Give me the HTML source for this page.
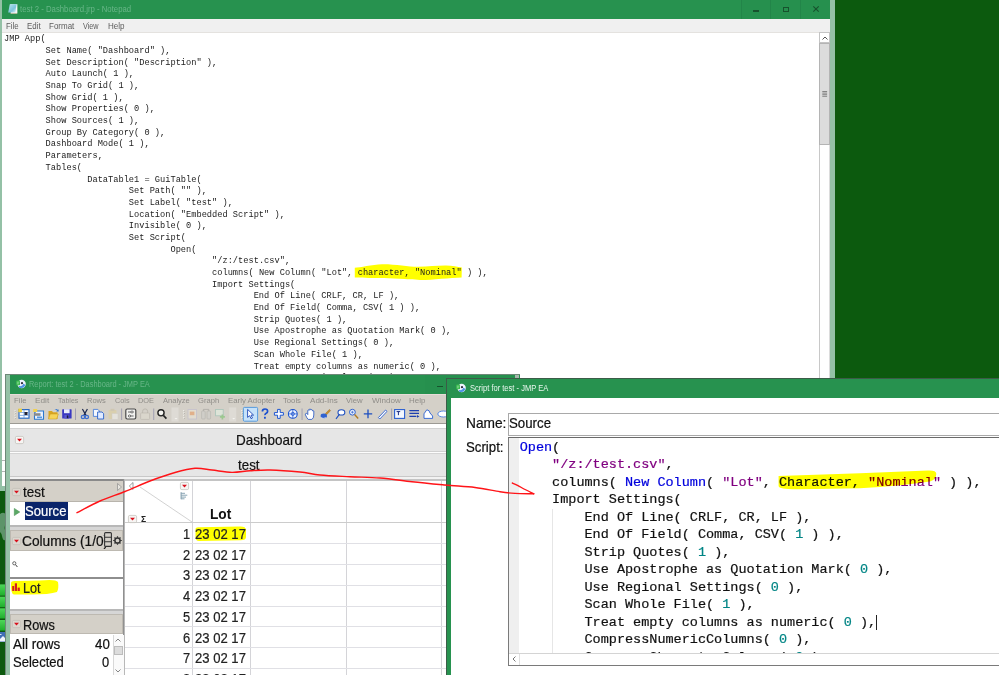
<!DOCTYPE html>
<html><head><meta charset="utf-8"><title>JMP Dashboard script</title>
<style>
*{box-sizing:border-box;margin:0;padding:0}
html,body{width:999px;height:675px;overflow:hidden;background:#0c5a0e}
body{position:relative;font-family:"Liberation Sans",sans-serif;color:#000}
.a{position:absolute}
.t{position:absolute;white-space:pre;line-height:1;transform-origin:0 0}
pre{position:absolute;font-family:"Liberation Mono",monospace;tab-size:8;-moz-tab-size:8;white-space:pre}
svg{position:absolute;overflow:visible}
.w{position:absolute;overflow:hidden}
.kb{color:#0000dd}.ks{color:#800080}.kn{color:#008585}

</style></head>
<body>
<svg style="left:0;top:0" width="6" height="675" viewBox="0 0 6 675"><path d="M0 514Q3 512 5 513.5L5.2 524Q4 528 5.2 531L5 540Q3.5 541 2.5 538L1.5 534L0 532Z" fill="#5d9469"/></svg>
<svg style="left:0;top:0" width="6" height="675" viewBox="0 0 6 675"><defs><linearGradient id="g584" x1="0" y1="0" x2="0" y2="1"><stop offset="0" stop-color="#4fd65a"/><stop offset="1" stop-color="#1fae2c"/></linearGradient></defs><rect x="0" y="584.4" width="5.2" height="11.2" fill="url(#g584)"/></svg>
<svg style="left:0;top:0" width="6" height="675" viewBox="0 0 6 675"><defs><linearGradient id="g596" x1="0" y1="0" x2="0" y2="1"><stop offset="0" stop-color="#4fd65a"/><stop offset="1" stop-color="#1fae2c"/></linearGradient></defs><rect x="0" y="596.7" width="5.2" height="10.5" fill="url(#g596)"/></svg>
<svg style="left:0;top:0" width="6" height="675" viewBox="0 0 6 675"><defs><linearGradient id="g608" x1="0" y1="0" x2="0" y2="1"><stop offset="0" stop-color="#4fd65a"/><stop offset="1" stop-color="#1fae2c"/></linearGradient></defs><rect x="0" y="608.3" width="5.2" height="10.2" fill="url(#g608)"/></svg>
<svg style="left:0;top:0" width="6" height="675" viewBox="0 0 6 675"><defs><linearGradient id="g620" x1="0" y1="0" x2="0" y2="1"><stop offset="0" stop-color="#4fd65a"/><stop offset="1" stop-color="#1fae2c"/></linearGradient></defs><rect x="0" y="620" width="5.2" height="10.6" fill="url(#g620)"/></svg>
<div class="a" style="left:0px;top:632px;width:5px;height:10px;background:#3f6fb5;"></div>
<svg style="left:0;top:633px" width="5" height="9" viewBox="0 0 5 9"><path d="M0 6L3 3L5 5V8.5H0Z" fill="#f0f4fa"/><path d="M0 1.5h1.5" stroke="#dfe8f5" stroke-width="1"/></svg>
<div class="a" style="left:0px;top:0px;width:835px;height:491px;background:#94c1a6;"></div>
<div class="a" style="left:2px;top:0px;width:828px;height:19px;background:#27924f;"></div>
<div class="a" style="left:741px;top:0px;width:89px;height:19px;background:#26904e;"></div>
<div class="a" style="left:741px;top:0px;width:1px;height:19px;background:#228549;"></div>
<div class="a" style="left:770px;top:0px;width:1px;height:19px;background:#228549;"></div>
<div class="a" style="left:800px;top:0px;width:1px;height:19px;background:#228549;"></div>
<div class="a" style="left:753px;top:10px;width:6px;height:1.5px;background:#17522d;"></div>
<div class="a" style="left:783px;top:7px;width:6px;height:5px;background:transparent;border:1px solid #17522d"></div>
<svg style="left:813px;top:6px" width="6" height="6" viewBox="0 0 6 6"><path d="M0.3 0.3L5.7 5.7M5.7 0.3L0.3 5.7" stroke="#17522d" stroke-width="1.1" fill="none"/></svg>
<svg style="left:7.6px;top:4.3px" width="10" height="10" viewBox="0 0 10 10"><defs><linearGradient id="npg" x1="0" y1="0" x2="1" y2="1"><stop offset="0" stop-color="#b8e4f0"/><stop offset="0.6" stop-color="#7cc4dc"/><stop offset="1" stop-color="#e8f6fa"/></linearGradient></defs><path d="M2.2 0.3h7.2v9h-6.6z" fill="#f4f8fa"/><path d="M1.8 0.3h6.8l-1.2 8.2h-7.2z" fill="url(#npg)"/><path d="M2.6 9.4h6.6" stroke="#e8c8b4" stroke-width="0.7"/></svg>
<div class="t" style="left:20.28px;top:5px;font-size:8.6px;transform:scaleX(0.9051);color:#68b688;">test 2 - Dashboard.jrp - Notepad</div>
<div class="a" style="left:2px;top:19px;width:828px;height:14px;background:#f0f0f0;border-bottom:1px solid #e4e2df"></div>
<div class="t" style="left:5.96px;top:22px;font-size:8.8px;transform:scaleX(0.8890);color:#5c5c5c;">File</div>
<div class="t" style="left:26.86px;top:22px;font-size:8.8px;transform:scaleX(0.8976);color:#5c5c5c;">Edit</div>
<div class="t" style="left:48.85px;top:22px;font-size:8.8px;transform:scaleX(0.9087);color:#5c5c5c;">Format</div>
<div class="t" style="left:82.67px;top:22px;font-size:8.8px;transform:scaleX(0.8247);color:#5c5c5c;">View</div>
<div class="t" style="left:107.84px;top:22px;font-size:8.8px;transform:scaleX(0.9164);color:#5c5c5c;">Help</div>
<div class="a" style="left:2px;top:33px;width:818px;height:453px;background:#fff;"></div>
<svg style="left:0;top:0" width="999" height="675"><path d="M354.8 267.8C360 267.5 372 264.5 382 264.2C395 264 408 266.8 418 266.8C428 266.6 438 265.4 446 265.5C452 265.6 458 267 461.8 267.6L461.6 277.4C450 277.6 432 280 420 279.9C408 279.5 390 278.3 380 278.1C370 277.9 360 277.5 354.8 277.4Z" fill="#ffff00"/></svg>
<pre style="left:4.4px;top:33.25px;font-size:9.3px;line-height:11.69px;color:#1c1c1c;transform:scaleX(0.9323);transform-origin:0 0">JMP App(
	Set Name( &quot;Dashboard&quot; ),
	Set Description( &quot;Description&quot; ),
	Auto Launch( 1 ),
	Snap To Grid( 1 ),
	Show Grid( 1 ),
	Show Properties( 0 ),
	Show Sources( 1 ),
	Group By Category( 0 ),
	Dashboard Mode( 1 ),
	Parameters,
	Tables(
		DataTable1 = GuiTable(
			Set Path( &quot;&quot; ),
			Set Label( &quot;test&quot; ),
			Location( &quot;Embedded Script&quot; ),
			Invisible( 0 ),
			Set Script(
				Open(
					&quot;/z:/test.csv&quot;,
					columns( New Column( &quot;Lot&quot;, character, &quot;Nominal&quot; ) ),
					Import Settings(
						End Of Line( CRLF, CR, LF ),
						End Of Field( Comma, CSV( 1 ) ),
						Strip Quotes( 1 ),
						Use Apostrophe as Quotation Mark( 0 ),
						Use Regional Settings( 0 ),
						Scan Whole File( 1 ),
						Treat empty columns as numeric( 0 ),
						CompressNumericColumns( 0 ),
						CompressCharacterColumns( 0 ),</pre>
<div class="a" style="left:819px;top:33px;width:11px;height:453px;background:#fff;border-left:1px solid #c8c8c8;border-right:1px solid #dcdcdc"></div>
<div class="a" style="left:819px;top:32px;width:11px;height:11px;background:#fff;border:1px solid #c4c4c4"></div>
<svg style="left:822px;top:36px" width="6" height="4" viewBox="0 0 6 4"><path d="M0.5 3.5L3 1L5.5 3.5" stroke="#555" stroke-width="1" fill="none"/></svg>
<div class="a" style="left:819px;top:43px;width:11px;height:102px;background:#dcdcdc;border:1px solid #b4b4b4"></div>
<svg style="left:0;top:0" width="999" height="120" viewBox="0 0 999 120"><path d="M822.3 91.5h4.8M822.3 93.1h4.8M822.3 94.7h4.8M822.3 96.3h4.8" stroke="#7a7a7a" stroke-width="0.9"/></svg>
<div class="a" style="left:2px;top:460px;width:3px;height:1px;background:#b4b4b4;"></div>
<div class="a" style="left:2px;top:471px;width:3px;height:1px;background:#b4b4b4;"></div>
<div class="a" style="left:5px;top:374px;width:515px;height:301px;background:#6e8878;"></div>
<div class="a" style="left:6px;top:375px;width:514px;height:300px;background:#94c1a6;"></div>
<div class="a" style="left:10px;top:375px;width:510px;height:19px;background:#27924f;"></div>
<div class="a" style="left:425px;top:375px;width:95px;height:19px;background:#26904e;"></div>
<div class="a" style="left:437px;top:385.5px;width:6px;height:1.2px;background:#17522d;"></div>
<div class="a" style="left:515px;top:375px;width:4px;height:3px;background:#a8b8ae;"></div>
<svg style="left:15.5px;top:379px" width="10" height="10" viewBox="0 0 10 10"><circle cx="5.6" cy="5" r="4.2" fill="#eef4ff"/><path d="M3 8.4q3 1.6 5.4-0.6l-1-2.2q-2 2-4.4 1.4z" fill="#4f93e6"/><path d="M6.8 4.6l2.6 1.4-1.4 1.6z" fill="#2f7fe0"/><rect x="0.2" y="1.6" width="3.8" height="4.6" rx="0.8" fill="#36b84a"/><path d="M0.8 3.2h2.6M0.8 4.8h2" stroke="#bff0c4" stroke-width="0.6"/><circle cx="6" cy="4.2" r="1.1" fill="#2a2a3a"/></svg>
<div class="t" style="left:29.18px;top:380px;font-size:8.4px;transform:scaleX(0.8867);color:#68b688;">Report: test 2 - Dashboard - JMP EA</div>
<div class="a" style="left:10px;top:394px;width:437px;height:29.5px;background:#d4d0c8;border-bottom:1px solid #9c9a94;border-top:1px solid #e6dcd8"></div>
<div class="t" style="left:14.34px;top:397px;font-size:8.0px;transform:scaleX(0.9631);color:#8f8d88;">File</div>
<div class="t" style="left:34.99px;top:397px;font-size:8.0px;transform:scaleX(1.0310);color:#8f8d88;">Edit</div>
<div class="t" style="left:57.73px;top:397px;font-size:8.0px;transform:scaleX(0.8785);color:#8f8d88;">Tables</div>
<div class="t" style="left:87.15px;top:397px;font-size:8.0px;transform:scaleX(0.9411);color:#8f8d88;">Rows</div>
<div class="t" style="left:114.81px;top:397px;font-size:8.0px;transform:scaleX(0.9160);color:#8f8d88;">Cols</div>
<div class="t" style="left:138.37px;top:397px;font-size:8.0px;transform:scaleX(0.9195);color:#8f8d88;">DOE</div>
<div class="t" style="left:162.79px;top:397px;font-size:8.0px;transform:scaleX(0.9422);color:#8f8d88;">Analyze</div>
<div class="t" style="left:198.49px;top:397px;font-size:8.0px;transform:scaleX(0.9510);color:#8f8d88;">Graph</div>
<div class="t" style="left:228.13px;top:397px;font-size:8.0px;transform:scaleX(0.9801);color:#8f8d88;">Early Adopter</div>
<div class="t" style="left:283.37px;top:397px;font-size:8.0px;transform:scaleX(0.9612);color:#8f8d88;">Tools</div>
<div class="t" style="left:309.76px;top:397px;font-size:8.0px;transform:scaleX(1.0089);color:#8f8d88;">Add-Ins</div>
<div class="t" style="left:346.07px;top:397px;font-size:8.0px;transform:scaleX(0.9698);color:#8f8d88;">View</div>
<div class="t" style="left:371.58px;top:397px;font-size:8.0px;transform:scaleX(1.0107);color:#8f8d88;">Window</div>
<div class="t" style="left:409.32px;top:397px;font-size:8.0px;transform:scaleX(0.9922);color:#8f8d88;">Help</div>
<svg style="left:0;top:0" width="447" height="675" viewBox="0 0 447 675"><rect x="14.6" y="410.0" width="1.3" height="1.3" fill="#f7f6f2"/><rect x="15.299999999999999" y="410.7" width="0.8" height="0.8" fill="#9a978f"/><rect x="14.6" y="412.4" width="1.3" height="1.3" fill="#f7f6f2"/><rect x="15.299999999999999" y="413.09999999999997" width="0.8" height="0.8" fill="#9a978f"/><rect x="14.6" y="414.8" width="1.3" height="1.3" fill="#f7f6f2"/><rect x="15.299999999999999" y="415.5" width="0.8" height="0.8" fill="#9a978f"/><rect x="14.6" y="417.2" width="1.3" height="1.3" fill="#f7f6f2"/><rect x="15.299999999999999" y="417.9" width="0.8" height="0.8" fill="#9a978f"/><rect x="19" y="409.6" width="10" height="8.6" fill="#fff" stroke="#2a6cc6" stroke-width="1.2"/><path d="M19 412.5h10M19 415.4h10M24 409.6v8.6" stroke="#6f9fe0" stroke-width="0.8"/><rect x="24.5" y="412" width="3" height="3" fill="#223"/><path d="M18.3 408.6h3.6v3.6h-3.6z" fill="#f2d23c"/><path d="M36 411h7.5v8.2h-9v-6z" fill="#eaf2ff" stroke="#2a78d0" stroke-width="1.1"/><rect x="33.2" y="409" width="4" height="3" fill="#f0d050"/><rect x="34" y="413.2" width="6.5" height="2.6" fill="#8a8a8a"/><rect x="37" y="416.5" width="5" height="1.6" fill="#5a9ae0"/><path d="M48.5 411h3.5l1 1.2h4.5v6.8h-9z" fill="#d9a520"/><path d="M48.5 419l1.6-5h8.2l-1.6 5z" fill="#f6d458" stroke="#c89818" stroke-width="0.5"/><path d="M54.5 409.6q2-1.6 3.6 0.4l0.6-1v2.6h-2.6l1-0.8q-1-1.2-2.6-1.2z" fill="#3a7ad0"/><rect x="62.2" y="409.2" width="9.4" height="9.4" rx="0.6" fill="#3a38c2"/><rect x="64" y="409.2" width="5.6" height="4" fill="#e8ecfa"/><rect x="64.4" y="415" width="4.6" height="3.6" fill="#5a58d0"/><rect x="66.8" y="415.4" width="1.6" height="2.8" fill="#1a1a40"/><rect x="75.1" y="408.5" width="0.9" height="11.5" fill="#9c9ab0"/><path d="M82.4 409l3.6 6.4M87.4 409l-3.6 6.4" stroke="#1e2a50" stroke-width="1.2" fill="none"/><circle cx="83" cy="417" r="1.7" fill="none" stroke="#3c6ed0" stroke-width="1.3"/><circle cx="86.8" cy="417" r="1.7" fill="none" stroke="#3c6ed0" stroke-width="1.3"/><path d="M93.4 409.4h4.4l1.6 1.6v5.4h-6z" fill="#f4f8ff" stroke="#4a7ed8" stroke-width="0.9"/><path d="M97.6 412h4.4l1.6 1.6v5.4h-6z" fill="#dfeaff" stroke="#2a62c8" stroke-width="0.9"/><rect x="108.5" y="410" width="8" height="9" rx="0.8" fill="#d9cfae"/><rect x="110.5" y="408.8" width="4" height="2.2" fill="#cfc7b2"/><rect x="112" y="413.5" width="6" height="6" fill="#e4e2dc" stroke="#cfccc4" stroke-width="0.5"/><rect x="121.2" y="408.5" width="0.9" height="11.5" fill="#9c9ab0"/><rect x="125.8" y="409" width="10" height="10" rx="1.4" fill="#f2f2f0" stroke="#4a4a4a" stroke-width="1.2"/><path d="M128 412h5.6M128 416h5.6" stroke="#444" stroke-width="0.8"/><circle cx="132" cy="412" r="1.1" fill="#fff" stroke="#333" stroke-width="0.6"/><circle cx="129.6" cy="416" r="1.1" fill="#fff" stroke="#333" stroke-width="0.6"/><rect x="140.6" y="413" width="9" height="6.4" rx="0.8" fill="#dad6cc" stroke="#bdb9b0" stroke-width="0.7"/><path d="M142.6 413v-1.6a2.5 2.5 0 0 1 5 0v1.6" fill="none" stroke="#bdb9b0" stroke-width="1"/><rect x="153.3" y="408.5" width="0.9" height="11.5" fill="#9c9ab0"/><circle cx="161" cy="412.8" r="3.1" fill="#f4f4f0" stroke="#222" stroke-width="1.4"/><path d="M163.4 415.4l3 3.2" stroke="#222" stroke-width="1.6"/><rect x="171.5" y="407.5" width="7" height="14" fill="#dedbd5"/><path d="M174.5 418h3l-1.5 1.6z" fill="#f5f4f0"/><rect x="183.2" y="410.0" width="1.3" height="1.3" fill="#f7f6f2"/><rect x="183.89999999999998" y="410.7" width="0.8" height="0.8" fill="#9a978f"/><rect x="183.2" y="412.4" width="1.3" height="1.3" fill="#f7f6f2"/><rect x="183.89999999999998" y="413.09999999999997" width="0.8" height="0.8" fill="#9a978f"/><rect x="183.2" y="414.8" width="1.3" height="1.3" fill="#f7f6f2"/><rect x="183.89999999999998" y="415.5" width="0.8" height="0.8" fill="#9a978f"/><rect x="183.2" y="417.2" width="1.3" height="1.3" fill="#f7f6f2"/><rect x="183.89999999999998" y="417.9" width="0.8" height="0.8" fill="#9a978f"/><rect x="188" y="409.6" width="8.6" height="9.4" fill="#e2dccf" stroke="#c4c0cc" stroke-width="0.8"/><rect x="189.8" y="411.6" width="4.6" height="3.6" fill="#e0b08a"/><rect x="201.6" y="411" width="3.6" height="8" rx="0.8" fill="#d0cec8" stroke="#b4b2ac" stroke-width="0.6"/><rect x="207" y="411" width="3.6" height="8" rx="0.8" fill="#d0cec8" stroke="#b4b2ac" stroke-width="0.6"/><path d="M203.4 411v-1.6h5.4v1.6" fill="none" stroke="#a8a6a0" stroke-width="0.7"/><rect x="215.6" y="409.4" width="7.6" height="6.4" fill="#dde4d8" stroke="#a8c4b8" stroke-width="0.8"/><path d="M222.4 414.4v5M219.9 416.9h5" stroke="#9cc890" stroke-width="1.7"/><rect x="229.2" y="407.5" width="7" height="14" fill="#dedbd5"/><path d="M232.2 418h3l-1.5 1.6z" fill="#f5f4f0"/><rect x="241.2" y="410.0" width="1.3" height="1.3" fill="#f7f6f2"/><rect x="241.89999999999998" y="410.7" width="0.8" height="0.8" fill="#9a978f"/><rect x="241.2" y="412.4" width="1.3" height="1.3" fill="#f7f6f2"/><rect x="241.89999999999998" y="413.09999999999997" width="0.8" height="0.8" fill="#9a978f"/><rect x="241.2" y="414.8" width="1.3" height="1.3" fill="#f7f6f2"/><rect x="241.89999999999998" y="415.5" width="0.8" height="0.8" fill="#9a978f"/><rect x="241.2" y="417.2" width="1.3" height="1.3" fill="#f7f6f2"/><rect x="241.89999999999998" y="417.9" width="0.8" height="0.8" fill="#9a978f"/><rect x="243.4" y="407.4" width="14.2" height="13.8" rx="1" fill="#c6e2fa" stroke="#4a94dc" stroke-width="0.9"/><path d="M247.6 409.4v8l2-1.7 1.5 3 1.4-0.7-1.5-2.9h2.6z" fill="#fff" stroke="#1f49b8" stroke-width="0.9"/><path d="M262.4 411.4q0-2.4 2.6-2.4t2.6 2.2q0 1.4-1.4 2.1t-1.2 1.8" fill="none" stroke="#1a4fd0" stroke-width="1.7"/><rect x="264" y="416.8" width="1.8" height="1.9" fill="#1a4fd0"/><path d="M277.6 409.4h2.6v3.2h3.2v2.6h-3.2v3.2h-2.6v-3.2h-3.2v-2.6h3.2z" fill="#fff" stroke="#1d55d0" stroke-width="1"/><circle cx="292.8" cy="413.9" r="4.4" fill="#e8f0ff" stroke="#1d55d0" stroke-width="1.1"/><circle cx="292.8" cy="413.9" r="1.6" fill="none" stroke="#1d55d0" stroke-width="0.8"/><path d="M288.4 413.9h8.8M292.8 409.5v8.8" stroke="#1d55d0" stroke-width="0.7"/><rect x="301.6" y="408.5" width="0.9" height="11.5" fill="#9c9ab0"/><path d="M306.6 413.2l1.2 1.4v-4.2q0.8-0.8 1.4 0v-1q0.8-0.8 1.6 0v0.6q0.8-0.8 1.6 0v0.8q0.8-0.6 1.4 0.2v4q0 3.4-2 4.4h-3.6q-1.2-1-2.8-4.6q-0.2-1.4 1.2-1.6z" fill="#fff" stroke="#1d4fc0" stroke-width="0.8"/><path d="M325.4 413.6l4-4.2 1.2 1.2-4 4.2z" fill="#c8902c" stroke="#8a5e18" stroke-width="0.4"/><ellipse cx="323.8" cy="416" rx="3.2" ry="2.4" fill="#2f62d0"/><path d="M321 417.6q2 1.6 5 0" stroke="#fff" stroke-width="0.6" fill="none"/><ellipse cx="341.4" cy="412.4" rx="3.4" ry="2.6" fill="#fff" stroke="#1d4fc0" stroke-width="1.1"/><path d="M339.4 414.4l-3.4 4.4" stroke="#1d4fc0" stroke-width="1.1"/><circle cx="352.4" cy="412.2" r="2.9" fill="#eef4ff" stroke="#2a5fd0" stroke-width="1"/><path d="M351 412.2h2.8M352.4 410.8v2.8" stroke="#2a5fd0" stroke-width="0.7"/><path d="M354.6 414.6l3.6 3.8" stroke="#b07a20" stroke-width="1.4"/><path d="M368 409.6v8.6M363.8 413.9h8.4" stroke="#1d4fc0" stroke-width="1.3"/><path d="M378.4 417.6l7.2-7.6 1.4 1.4-7.2 7.6z" fill="#fff" stroke="#2a5fd0" stroke-width="0.9"/><rect x="391.2" y="408.5" width="0.9" height="11.5" fill="#9c9ab0"/><rect x="394.6" y="409.6" width="10" height="8.8" fill="#f4f8ff" stroke="#2a5fd0" stroke-width="1.1"/><path d="M396.6 411.6h3.6M398.4 411.6v3.6" stroke="#1a2a80" stroke-width="1"/><path d="M409.4 410.6h9.6M409.4 413.4h9.6M409.4 416.4h7" stroke="#1d3fb0" stroke-width="1.2"/><path d="M417 415l2.4 1.4-2.4 1.4z" fill="#1d3fb0"/><path d="M424 418.4v-4.6l2.8-4q2.8 0.2 3.2 3.2l2.6 3v2.4z" fill="#fff" stroke="#2a5fd0" stroke-width="0.9"/><ellipse cx="443.4" cy="414" rx="5.6" ry="3" fill="#fff" stroke="#4a7fe0" stroke-width="0.9"/></svg>
<div class="a" style="left:10px;top:424px;width:437px;height:4.5px;background:#fff;"></div>
<div class="a" style="left:10px;top:428px;width:437px;height:24px;background:#e6e6e6;border-top:1px solid #d2d2d2;border-bottom:1px solid #d0d0d0"></div>
<div class="a" style="left:10px;top:452px;width:437px;height:1px;background:#fdfdfd;"></div>
<div class="a" style="left:10px;top:453px;width:437px;height:24px;background:#e6e6e6;border-top:1px solid #d4d4d4;border-bottom:1px solid #c8c8c8"></div>
<div class="a" style="left:10px;top:477px;width:437px;height:2px;background:#f2f2f2;"></div>
<div class="t" style="left:236.12px;top:433px;font-size:14.3px;transform:scaleX(0.9423);color:#111;-webkit-text-stroke:0.22px;">Dashboard</div>
<div class="t" style="left:238.43px;top:458px;font-size:14.3px;transform:scaleX(0.9336);color:#111;-webkit-text-stroke:0.22px;">test</div>
<svg style="left:14.6px;top:436px" width="9" height="8" viewBox="0 0 9 8"><rect x="0.4" y="0.4" width="8.2" height="7.2" rx="1.4" fill="#f6f5f3" stroke="#c2beb8" stroke-width="0.7"/><path d="M2 2.8h5L4.5 5.6z" fill="#d8101c"/></svg>
<div class="a" style="left:10px;top:479px;width:114px;height:196px;background:#909090;"></div>
<div class="a" style="left:124px;top:479px;width:1px;height:196px;background:#b8b8b8;"></div>
<div class="a" style="left:10px;top:479px;width:113px;height:2px;background:#8a8a8a;"></div>
<div class="a" style="left:10px;top:481px;width:113px;height:21px;background:#d4d0c8;border-bottom:1px solid #b8b4ac"></div>
<svg style="left:12.3px;top:487.5px" width="9" height="8" viewBox="0 0 9 8"><rect x="0.4" y="0.4" width="8.2" height="7.2" rx="1.4" fill="#dbd7cf" stroke="#c2beb6" stroke-width="0.7"/><path d="M2 2.8h5L4.5 5.6z" fill="#d8101c"/></svg>
<div class="t" style="left:22.73px;top:485px;font-size:14.3px;transform:scaleX(0.9423);color:#111;-webkit-text-stroke:0.22px;">test</div>
<svg style="left:116.5px;top:482.5px" width="5" height="8" viewBox="0 0 5 8"><path d="M0.5 0.5L4.5 4L0.5 7.5z" fill="#e8e6e0" stroke="#8c8c8c" stroke-width="0.7"/></svg>
<div class="a" style="left:10px;top:502px;width:113px;height:23.5px;background:#fff;"></div>
<svg style="left:14px;top:507.5px" width="6" height="8" viewBox="0 0 6 8"><path d="M0.3 0.4L5.8 4L0.3 7.6z" fill="#5aa865" stroke="#3f8a4c" stroke-width="0.5"/></svg>
<div class="a" style="left:25px;top:502px;width:42.5px;height:17.5px;background:#0a246a;"></div>
<div class="t" style="left:25.21px;top:504px;font-size:14.3px;transform:scaleX(0.9143);color:#fff;-webkit-text-stroke:0.22px;">Source</div>
<div class="a" style="left:10px;top:525px;width:113px;height:2px;background:#b8b8b8;"></div>
<div class="a" style="left:10px;top:527px;width:113px;height:4px;background:#d6d6d6;"></div>
<div class="a" style="left:10px;top:530px;width:113px;height:21px;background:#d4d0c8;border:1px solid #bdb9b1"></div>
<svg style="left:12.3px;top:536.5px" width="9" height="8" viewBox="0 0 9 8"><rect x="0.4" y="0.4" width="8.2" height="7.2" rx="1.4" fill="#dbd7cf" stroke="#c2beb6" stroke-width="0.7"/><path d="M2 2.8h5L4.5 5.6z" fill="#d8101c"/></svg>
<div class="t" style="left:22.28px;top:534px;font-size:14.3px;transform:scaleX(0.9597);color:#111;-webkit-text-stroke:0.22px;">Columns (1/0)</div>
<svg style="left:104.3px;top:532px" width="8" height="15" viewBox="0 0 8 15"><rect x="0.6" y="0.6" width="6.8" height="13.8" rx="1" fill="#d4d0c8" stroke="#333" stroke-width="1.1"/><path d="M0.6 5.2h6.8M0.6 9.8h6.8" stroke="#333" stroke-width="1.1"/></svg>
<svg style="left:112.8px;top:535.6px" width="9" height="9" viewBox="0 0 9 9"><circle cx="4.5" cy="4.5" r="2.6" fill="none" stroke="#333" stroke-width="1.5"/><path d="M4.5 0.2v1.6M4.5 7.2v1.6M0.2 4.5h1.6M7.2 4.5h1.6M1.5 1.5l1.1 1.1M6.4 6.4l1.1 1.1M1.5 7.5l1.1-1.1M6.4 2.6l1.1-1.1" stroke="#333" stroke-width="1.2"/></svg>
<div class="a" style="left:10px;top:550.5px;width:113px;height:27px;background:#fff;"></div>
<svg style="left:11.5px;top:561px" width="6" height="7" viewBox="0 0 6 7"><circle cx="2.3" cy="2.3" r="1.6" fill="none" stroke="#444" stroke-width="0.8"/><path d="M3.5 3.6L5.4 6" stroke="#444" stroke-width="1"/></svg>
<div class="a" style="left:10px;top:577.3px;width:113px;height:1.5px;background:#8e8e8e;"></div>
<div class="a" style="left:10px;top:578.8px;width:113px;height:30px;background:#fff;"></div>
<svg style="left:0;top:0" width="999" height="675"><path d="M11 583 Q11 580.5 16 581 L40 580.5 Q56 579 58 582 Q59 588 57 592 Q50 594.5 30 594.5 L14 594.5 Q10.5 594 11 583Z" fill="#ffff00"/></svg>
<svg style="left:12px;top:583px" width="8" height="8" viewBox="0 0 8 8"><rect x="0.2" y="3" width="2" height="5" fill="#d62020"/><rect x="2.8" y="0.3" width="2.2" height="7.7" fill="#d62020"/><rect x="5.6" y="4.6" width="2.2" height="3.4" fill="#d62020"/></svg>
<div class="t" style="left:23.17px;top:581px;font-size:14.3px;transform:scaleX(0.8870);color:#222;-webkit-text-stroke:0.22px;">Lot</div>
<div class="a" style="left:10px;top:608.5px;width:113px;height:2px;background:#b8b8b8;"></div>
<div class="a" style="left:10px;top:610.5px;width:113px;height:3px;background:#d6d6d6;"></div>
<div class="a" style="left:10px;top:613.5px;width:113px;height:20px;background:#d4d0c8;border:1px solid #bdb9b1"></div>
<svg style="left:12.3px;top:619.5px" width="9" height="8" viewBox="0 0 9 8"><rect x="0.4" y="0.4" width="8.2" height="7.2" rx="1.4" fill="#dbd7cf" stroke="#c2beb6" stroke-width="0.7"/><path d="M2 2.8h5L4.5 5.6z" fill="#d8101c"/></svg>
<div class="t" style="left:22.67px;top:618px;font-size:14.3px;transform:scaleX(0.8895);color:#111;-webkit-text-stroke:0.22px;">Rows</div>
<div class="a" style="left:10px;top:633.5px;width:113px;height:42px;background:#fff;"></div>
<div class="t" style="left:13.20px;top:637px;font-size:14.3px;transform:scaleX(0.9429);color:#111;-webkit-text-stroke:0.22px;">All rows</div>
<div class="t" style="left:94.64px;top:637px;font-size:14.3px;transform:scaleX(0.9292);color:#111;-webkit-text-stroke:0.22px;">40</div>
<div class="t" style="left:12.72px;top:655px;font-size:14.3px;transform:scaleX(0.9132);color:#111;-webkit-text-stroke:0.22px;">Selected</div>
<div class="t" style="left:102.29px;top:655px;font-size:14.3px;transform:scaleX(0.9000);color:#111;-webkit-text-stroke:0.22px;">0</div>
<div class="a" style="left:112.5px;top:634.5px;width:11px;height:41px;background:#fafafa;border-left:1px solid #d8d8d8"></div>
<svg style="left:115px;top:638px" width="6" height="4" viewBox="0 0 6 4"><path d="M0.5 3.5L3 1L5.5 3.5" stroke="#777" stroke-width="0.9" fill="none"/></svg>
<div class="a" style="left:113.5px;top:645.5px;width:9px;height:9px;background:#dcdcdc;border:1px solid #bcbcbc"></div>
<svg style="left:115px;top:669px" width="6" height="4" viewBox="0 0 6 4"><path d="M0.5 0.5L3 3L5.5 0.5" stroke="#777" stroke-width="0.9" fill="none"/></svg>
<div class="a" style="left:125px;top:479px;width:322px;height:2px;background:#c4c4c4;"></div>
<div class="a" style="left:125px;top:481px;width:322px;height:194px;background:#fff;"></div>
<div class="a" style="left:192px;top:481px;width:1px;height:194px;background:#d4d4d8;"></div>
<div class="a" style="left:250px;top:481px;width:1px;height:194px;background:#d4d4d8;"></div>
<div class="a" style="left:346px;top:481px;width:1px;height:194px;background:#d4d4d8;"></div>
<div class="a" style="left:441px;top:481px;width:1px;height:194px;background:#d4d4d8;"></div>
<div class="a" style="left:125px;top:522px;width:321px;height:1px;background:#cccccc;"></div>
<div class="a" style="left:125px;top:543px;width:321px;height:1px;background:#e0e0e5;"></div>
<div class="a" style="left:125px;top:564px;width:321px;height:1px;background:#e0e0e5;"></div>
<div class="a" style="left:125px;top:585px;width:321px;height:1px;background:#e0e0e5;"></div>
<div class="a" style="left:125px;top:606px;width:321px;height:1px;background:#e0e0e5;"></div>
<div class="a" style="left:125px;top:626px;width:321px;height:1px;background:#e0e0e5;"></div>
<div class="a" style="left:125px;top:647px;width:321px;height:1px;background:#e0e0e5;"></div>
<div class="a" style="left:125px;top:668px;width:321px;height:1px;background:#e0e0e5;"></div>
<svg style="left:0;top:0" width="999" height="675"><path d="M140 487L192 522" stroke="#c6c6c6" stroke-width="0.8" fill="none"/><path d="M133 482.5L129.3 486L133 489.5z" fill="#fff" stroke="#777" stroke-width="0.7"/><rect x="180.6" y="492.2" width="1" height="7" fill="#7a96a8"/><path d="M181 493.3h4M181 495.2h6.3M181 497.1h5M181 498.8h3.5" stroke="#8aa6b4" stroke-width="1"/></svg>
<svg style="left:180.3px;top:482.3px" width="9" height="8" viewBox="0 0 9 8"><rect x="0.4" y="0.4" width="8.2" height="7.2" rx="1.4" fill="#f6f5f3" stroke="#c2beb8" stroke-width="0.7"/><path d="M2 2.8h5L4.5 5.6z" fill="#d8101c"/></svg>
<svg style="left:128.3px;top:514.8px" width="9" height="8" viewBox="0 0 9 8"><rect x="0.4" y="0.4" width="8.2" height="7.2" rx="1.4" fill="#f6f5f3" stroke="#c2beb8" stroke-width="0.7"/><path d="M2 2.8h5L4.5 5.6z" fill="#d8101c"/></svg>
<div class="t" style="left:140.88px;top:515px;font-size:8.5px;color:#222;font-weight:700;">Σ</div>
<svg style="left:0;top:0" width="999" height="675"><path d="M195.5 530 Q195 527 199 527.3 L240 526.6 Q246 526.5 246 530 L246 537 Q246 540.5 240 540.3 L199 541 Q195.5 541 195.5 537Z" fill="#ffff00"/></svg>
<div class="t" style="left:210.06px;top:507px;font-size:14.3px;transform:scaleX(0.9571);color:#111;font-weight:700;">Lot</div>
<div class="t" style="left:182.78px;top:527px;font-size:14.3px;transform:scaleX(0.9000);color:#222;-webkit-text-stroke:0.22px;">1</div>
<div class="t" style="left:194.64px;top:527px;font-size:14.3px;transform:scaleX(0.9148);color:#222;-webkit-text-stroke:0.22px;">23 02 17</div>
<div class="t" style="left:182.80px;top:548px;font-size:14.3px;transform:scaleX(0.9000);color:#222;-webkit-text-stroke:0.22px;">2</div>
<div class="t" style="left:194.64px;top:548px;font-size:14.3px;transform:scaleX(0.9148);color:#222;-webkit-text-stroke:0.22px;">23 02 17</div>
<div class="t" style="left:182.75px;top:568px;font-size:14.3px;transform:scaleX(0.9000);color:#222;-webkit-text-stroke:0.22px;">3</div>
<div class="t" style="left:194.64px;top:568px;font-size:14.3px;transform:scaleX(0.9148);color:#222;-webkit-text-stroke:0.22px;">23 02 17</div>
<div class="t" style="left:182.55px;top:589px;font-size:14.3px;transform:scaleX(0.9000);color:#222;-webkit-text-stroke:0.22px;">4</div>
<div class="t" style="left:194.64px;top:589px;font-size:14.3px;transform:scaleX(0.9148);color:#222;-webkit-text-stroke:0.22px;">23 02 17</div>
<div class="t" style="left:182.73px;top:610px;font-size:14.3px;transform:scaleX(0.9000);color:#222;-webkit-text-stroke:0.22px;">5</div>
<div class="t" style="left:194.64px;top:610px;font-size:14.3px;transform:scaleX(0.9148);color:#222;-webkit-text-stroke:0.22px;">23 02 17</div>
<div class="t" style="left:182.75px;top:631px;font-size:14.3px;transform:scaleX(0.9000);color:#222;-webkit-text-stroke:0.22px;">6</div>
<div class="t" style="left:194.64px;top:631px;font-size:14.3px;transform:scaleX(0.9148);color:#222;-webkit-text-stroke:0.22px;">23 02 17</div>
<div class="t" style="left:182.80px;top:651px;font-size:14.3px;transform:scaleX(0.9000);color:#222;-webkit-text-stroke:0.22px;">7</div>
<div class="t" style="left:194.64px;top:651px;font-size:14.3px;transform:scaleX(0.9148);color:#222;-webkit-text-stroke:0.22px;">23 02 17</div>
<div class="t" style="left:182.75px;top:672px;font-size:14.3px;transform:scaleX(0.9000);color:#222;-webkit-text-stroke:0.22px;">8</div>
<div class="t" style="left:194.64px;top:672px;font-size:14.3px;transform:scaleX(0.9148);color:#222;-webkit-text-stroke:0.22px;">23 02 17</div>
<div class="a" style="left:446px;top:378px;width:553px;height:297px;background:#3c5c48;"></div>
<div class="a" style="left:447px;top:379px;width:552px;height:296px;background:#27924f;"></div>
<div class="a" style="left:451px;top:398px;width:548px;height:277px;background:#fff;"></div>
<svg style="left:456.2px;top:382.6px" width="10" height="10" viewBox="0 0 10 10"><circle cx="5.6" cy="5" r="4.2" fill="#eef4ff"/><path d="M3 8.4q3 1.6 5.4-0.6l-1-2.2q-2 2-4.4 1.4z" fill="#4f93e6"/><path d="M6.8 4.6l2.6 1.4-1.4 1.6z" fill="#2f7fe0"/><rect x="0.2" y="1.6" width="3.8" height="4.6" rx="0.8" fill="#36b84a"/><path d="M0.8 3.2h2.6M0.8 4.8h2" stroke="#bff0c4" stroke-width="0.6"/><circle cx="6" cy="4.2" r="1.1" fill="#2a2a3a"/></svg>
<div class="t" style="left:469.85px;top:384px;font-size:8.4px;transform:scaleX(0.9006);color:#e8f6ee;">Script for test - JMP EA</div>
<div class="t" style="left:465.80px;top:416px;font-size:14.3px;transform:scaleX(0.9601);color:#111;-webkit-text-stroke:0.22px;">Name:</div>
<div class="t" style="left:465.90px;top:440px;font-size:14.3px;transform:scaleX(0.9262);color:#111;-webkit-text-stroke:0.22px;">Script:</div>
<div class="a" style="left:508px;top:413px;width:491px;height:23px;background:#fff;border:1px solid #a9a9a9;border-right:0"></div>
<div class="t" style="left:509.00px;top:416px;font-size:14.3px;transform:scaleX(0.9280);color:#111;-webkit-text-stroke:0.22px;">Source</div>
<div class="a" style="left:508px;top:437px;width:491px;height:229px;background:#fff;border:1px solid #7a7a7a;border-right:0;border-top:1px solid #6a6a6a"></div>
<div class="a" style="left:509px;top:438px;width:10px;height:215px;background:#efefef;"></div>
<div class="a" style="left:509px;top:653px;width:490px;height:12px;background:#fff;border-top:1px solid #d4d4d4"></div>
<div class="a" style="left:519px;top:654px;width:1px;height:11px;background:#e0e0e0;"></div>
<svg style="left:511.5px;top:656px" width="4" height="6" viewBox="0 0 4 6"><path d="M3.5 0.5L1 3L3.5 5.5" stroke="#666" stroke-width="0.9" fill="none"/></svg>
<div class="a" style="left:552px;top:509px;width:1px;height:144px;background:#e6e6e6;"></div>
<div class="w" style="left:509px;top:439px;width:490px;height:214px"><pre style="left:10.7px;top:-0.5px;font-size:13.5px;line-height:17.5px;color:#111;-webkit-text-stroke:0.2px"><span class="kb">Open</span>(
    <span class="ks">&quot;/z:/test.csv&quot;</span>,
    columns( <span class="kb">New Column</span>( <span class="ks">&quot;Lot&quot;</span>, Character, <span class="ks">&quot;Nominal&quot;</span> ) ),
    Import Settings(
        End Of Line( CRLF, CR, LF ),
        End Of Field( Comma, CSV( <span class="kn">1</span> ) ),
        Strip Quotes( <span class="kn">1</span> ),
        Use Apostrophe as Quotation Mark( <span class="kn">0</span> ),
        Use Regional Settings( <span class="kn">0</span> ),
        Scan Whole File( <span class="kn">1</span> ),
        Treat empty columns as numeric( <span class="kn">0</span> ),
        CompressNumericColumns( <span class="kn">0</span> ),
        CompressCharacterColumns( <span class="kn">0</span> ),</pre></div>
<div class="a" style="left:875.5px;top:615px;width:1px;height:15px;background:#222;"></div>
<svg style="left:0;top:0;mix-blend-mode:multiply" width="999" height="675"><path d="M778.6 476L860 473.2L928 470.6Q936.5 470.3 936.3 474Q936.2 479.5 930 481.5Q900 486 860 488.2L800 489.2Q778.8 489.6 778.6 486Z" fill="#ffff00"/></svg>
<svg style="left:0;top:0" width="999" height="675" viewBox="0 0 999 675"><path d="M77.0 512.7C80.8 510.8 92.0 504.5 100.0 501.0C108.0 497.5 116.7 494.8 125.0 491.5C133.3 488.2 141.7 484.2 150.0 481.0C158.3 477.8 167.5 474.6 175.0 472.5C182.5 470.4 188.8 468.7 195.0 468.3C201.2 467.9 205.8 469.3 212.0 470.0C218.2 470.7 225.7 472.3 232.0 472.4C238.3 472.5 243.7 471.2 250.0 470.8C256.3 470.4 261.7 469.8 270.0 470.0C278.3 470.2 291.7 471.2 300.0 472.0C308.3 472.8 311.7 474.2 320.0 475.0C328.3 475.8 340.0 476.2 350.0 476.7C360.0 477.2 369.7 477.2 380.0 478.0C390.3 478.8 401.2 480.5 412.0 481.7C422.8 482.9 434.5 484.0 445.0 485.0C455.5 486.0 465.8 486.4 475.0 487.5C484.2 488.6 493.3 490.8 500.0 491.8C506.7 492.8 509.4 493.1 515.0 493.4C520.6 493.7 530.7 493.7 533.8 493.8" fill="none" stroke="#ff1418" stroke-width="1.4" stroke-linecap="round" stroke-linejoin="round"/><path d="M512.3 483.0C513.2 483.4 516.0 484.6 518.0 485.6C520.0 486.6 521.4 487.6 524.0 489.0C526.6 490.4 532.2 493.0 533.8 493.8" fill="none" stroke="#ff1418" stroke-width="1.4" stroke-linecap="round" stroke-linejoin="round"/></svg>
</body></html>
